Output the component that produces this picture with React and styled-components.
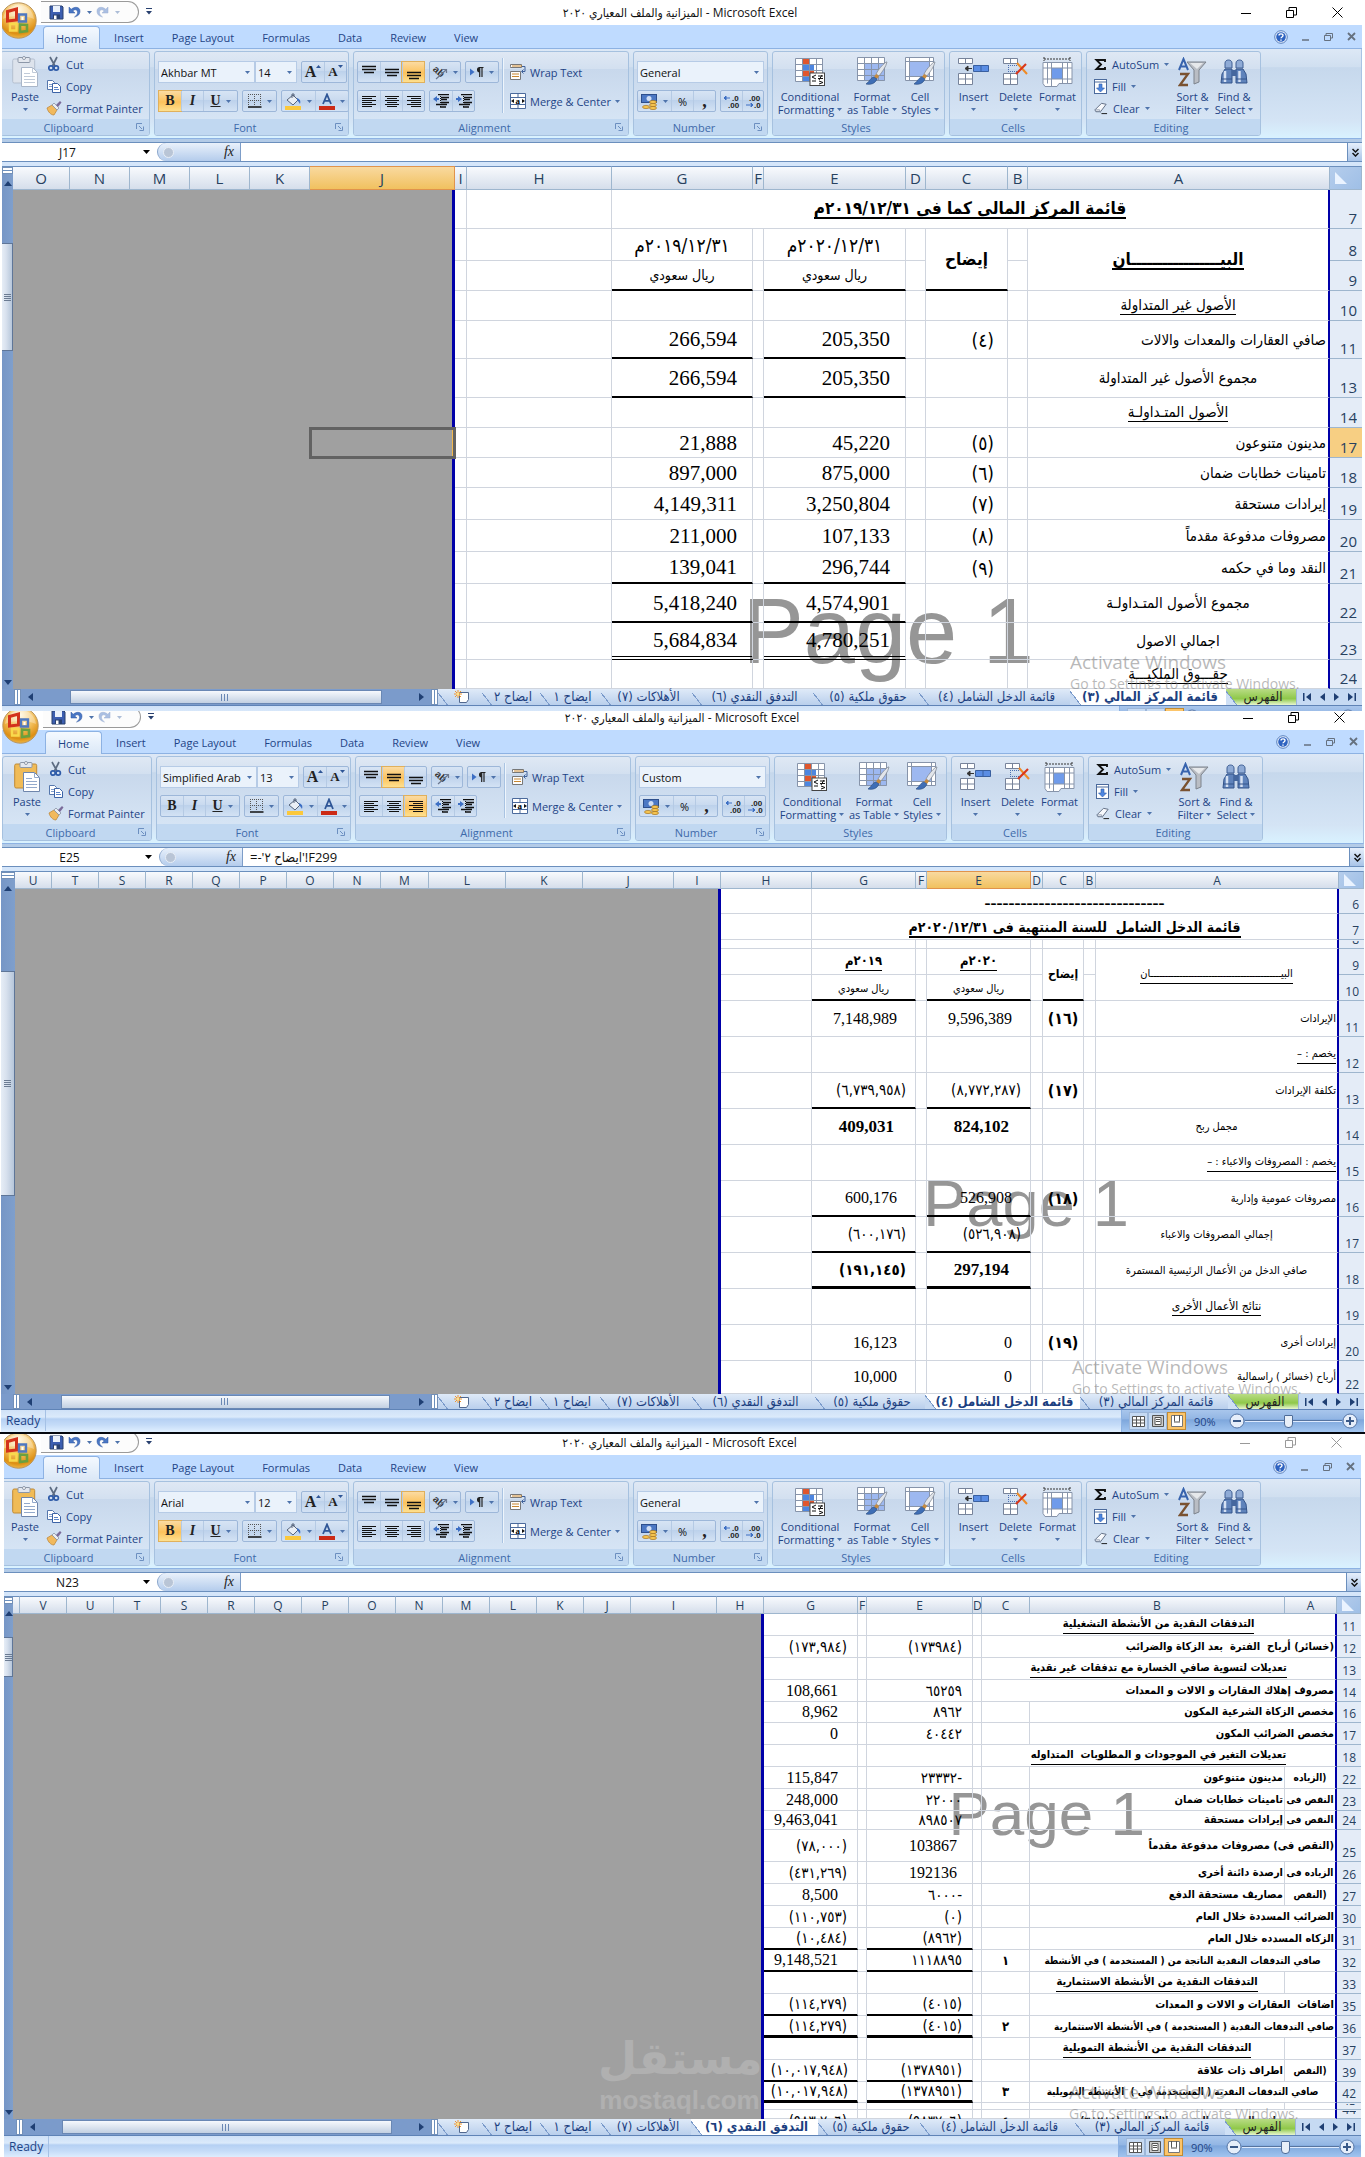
import React from 'react';
import styled, { createGlobalStyle, css } from 'styled-components';

const ui = '"Open Sans", "DejaVu Sans Condensed", "DejaVu Sans", sans-serif';
const arabic = '"DejaVu Sans Condensed", "DejaVu Sans", sans-serif';
const serif = '"Liberation Serif", "DejaVu Sans Condensed", "DejaVu Sans", serif';

const GlobalStyle = createGlobalStyle`
  * { box-sizing: border-box; }
  body { margin: 0; background: #fff; font-family: ${ui}; font-size: 11px; color: #1e4486; }
  button, input, select { font: inherit; color: inherit; margin: 0; padding: 0; border: 0; background: none; }
  svg { display: block; flex: none; }
`;

/* ---------- window frame ---------- */

const Window = styled.section`
  position: relative;
  overflow: hidden;
  margin-right: ${p => p.$right}px;
  border-left: ${p => p.$left}px solid #fff;
`;

const Chrome = styled.div`
  margin-left: ${p => p.$shift}px;
`;

const TitleBar = styled.header`
  display: flex;
  align-items: flex-end;
  height: ${p => p.$height}px;
  overflow: hidden;
  background: #fff;
`;

const TitleInner = styled.div`
  display: flex;
  flex: 1;
  height: 25px;
`;

const QuickAccess = styled.div`
  display: flex;
  align-items: center;
  width: 98px;
  height: 22px;
  margin: 1px 0 0 41px;
  padding: 0 0 0 8px;
  gap: 4px;
  border: 1px solid #9a9a9a;
  border-left: 0;
  border-radius: 0 11px 11px 0;
  background: #fcfcfc;
`;

const QatButton = styled.button`
  display: flex;
  align-items: center;
  gap: 6px;
  opacity: ${p => (p.$dim ? 0.45 : 1)};
`;

const QatMore = styled.button`
  width: 20px;
  height: 22px;
  display: flex;
  align-items: center;
  justify-content: center;
`;

const TitleText = styled.h1`
  flex: 1;
  margin: 0;
  padding-left: 169px;
  font-size: 12px;
  font-weight: 400;
  line-height: 25px;
  text-align: center;
  color: #111;
`;

const WindowButtons = styled.div`
  display: flex;
  align-items: center;
  width: 330px;
  justify-content: flex-end;
  padding-right: 19px;
  gap: 35px;
  color: ${p => (p.$idle ? '#999' : '#000')};
`;

const Orb = styled.button`
  position: absolute;
  left: ${p => p.$shift}px;
  top: ${p => p.$top}px;
  width: 37px;
  height: 37px;
  z-index: 5;
`;

const TabRow = styled.nav`
  display: flex;
  align-items: flex-end;
  height: 24px;
  padding-left: 43px;
  background: #bfdbff;
  border-bottom: 1px solid #8db2e3;
`;

const RibbonTab = styled.button`
  height: 22px;
  padding: 0 14px;
  font-size: 11px;
  ${p => p.$active && css`
    padding: 0 12px;
    margin-bottom: -1px;
    height: 23px;
    border: 1px solid #8db2e3;
    border-bottom: 0;
    border-radius: 4px 4px 0 0;
    background: linear-gradient(#f4f9ff, #dbe8f7);
  `}
`;

const TabTools = styled.div`
  display: flex;
  align-items: center;
  align-self: center;
  gap: 14px;
  margin-left: auto;
  padding-right: 6px;
`;

/* ---------- ribbon ---------- */

const Ribbon = styled.div`
  display: flex;
  gap: 4px;
  height: 90px;
  padding: 2px 0 3px;
  border-bottom: 1px solid #8db2e3;
  border-right: 1px solid #a8c3e4;
  background: linear-gradient(#dde8f6 0, #d0dff0 20%, #c6d8ec 21%, #d4e4f5 80%, #d9f2ff 100%);
`;

const GroupBox = styled.div`
  display: flex;
  flex-direction: column;
  width: ${p => p.$width}px;
  height: 85px;
  border: 1px solid #a6c1df;
  border-radius: 3px;
  background: linear-gradient(#dfe8f4 0, #d3e0f0 20%, #c8d8ec 21%, #dae8f7 100%);
  overflow: hidden;
`;

const GroupBody = styled.div`
  display: flex;
  flex: 1;
  padding: 0 3px;
`;

const GroupLabel = styled.div`
  display: flex;
  align-items: center;
  height: 16px;
  padding-right: 5px;
  background: #c1d8f1;
  color: #3e6aaa;
  span { flex: 1; text-align: center; }
`;

const Col = styled.div`
  display: flex;
  flex-direction: column;
  gap: 7px;
  padding-top: 9px;
`;

const Line = styled.div`
  display: flex;
  gap: 4px;
`;

const ButtonStrip = styled.div`
  display: flex;
  height: 22px;
  border: 1px solid #9db7d9;
  border-radius: 2px;
  background: linear-gradient(#d7e4f4 0, #c9daef 45%, #bcd1eb 46%, #d3e2f4 100%);
`;

const Tool = styled.button`
  display: flex;
  align-items: center;
  justify-content: center;
  gap: 5px;
  width: ${p => p.$width || 22}px;
  height: 20px;
  color: #111;
  & + & { border-left: 1px solid #b5cae4; }
  ${p => p.$tight && 'gap: 0; align-items: flex-start; padding-top: 3px;'}
  ${p => p.$on && css`background: linear-gradient(#fbdba2, #fcc25c 55%, #fee08e); box-shadow: 0 0 0 1px #e0b05c;`}
`;

const Glyph = styled.span`
  font-family: "Liberation Serif", serif;
  font-size: ${p => p.$size || 14}px;
  font-weight: ${p => (p.$light ? 400 : 700)};
  line-height: 14px;
  font-style: ${p => (p.$italic ? 'italic' : 'normal')};
  text-decoration: ${p => (p.$under ? 'underline' : 'none')};
  color: #222;
`;

const SelectWrap = styled.div`
  display: grid;
  width: ${p => p.$width}px;
  height: 22px;
  align-items: center;
  border: 1px solid #b6cbe6;
  background: #eaf2fb;
  margin-right: ${p => (p.$tight ? '-4px' : 0)};
  select, svg { grid-area: 1 / 1; }
  select { appearance: none; width: 100%; height: 20px; padding: 0 2px; color: #111; outline: 0; }
  svg { justify-self: end; margin-right: 4px; pointer-events: none; }
`;

const Separator = styled.div`
  width: 2px;
  margin: 6px 6px 6px 3px;
  border-left: 1px solid #a9c3e2;
  border-right: 1px solid #eef5fc;
`;

const SmallList = styled.div`
  display: flex;
  flex-direction: column;
  padding-top: 1px;
`;

const EditList = styled(SmallList)`
  width: 82px;
  padding-left: 4px;
`;

const SmallButton = styled.button`
  display: flex;
  align-items: center;
  gap: ${p => p.$gap || 4}px;
  height: 22px;
  white-space: nowrap;
`;

const BigButton = styled.button`
  display: flex;
  flex-direction: column;
  align-items: center;
  width: ${p => p.$width}px;
  padding-top: 3px;
  line-height: 13px;
  white-space: nowrap;
  i { height: 35px; display: flex; align-items: center; justify-content: center; padding-bottom: 2px; }
  span { display: flex; align-items: center; gap: 3px; height: 13px; }
`;

/* ---------- formula bar ---------- */

const FormulaBar = styled.div`
  display: flex;
  height: 27px;
  border-top: 3px solid #b3cbe7;
  border-bottom: 4px solid #d5e6fa;
`;

const FormulaInner = styled.div`
  display: flex;
  flex: 1;
  border-top: 1px solid #6b8fbd;
  border-bottom: 1px solid #6b8fbd;
  background: #fff;
`;

const NameBox = styled.input`
  width: 143px;
  padding-right: 8px;
  text-align: center;
  font-size: 12px;
  color: #111;
  outline: 0;
`;

const FxPill = styled.div`
  display: flex;
  align-items: center;
  justify-content: space-between;
  width: 84px;
  margin-left: 7px;
  padding: 0 6px 0 5px;
  border-left: 1px solid #8aa6cc;
  border-right: 1px solid #7d9dc8;
  border-radius: 10px 0 0 10px;
  background: linear-gradient(#e9f1fb, #b4ccec);
  &::before { content: ""; width: 9px; height: 9px; border-radius: 50%; background: #b9c5d6; border: 1px solid #e8eef6; }
`;

const FormulaInput = styled.input`
  flex: 1;
  min-width: 0;
  padding-left: 7px;
  font-size: 13px;
  color: #111;
  outline: 0;
`;

const Expand = styled.button`
  width: 15px;
  display: flex;
  align-items: center;
  justify-content: center;
  border-left: 1px solid #6b8fbd;
  background: linear-gradient(#e6effb, #a9c4e8);
`;

/* ---------- sheet ---------- */

const SheetArea = styled.div`
  position: relative;
  z-index: 0;
  display: flex;
`;

const VScroll = styled.div`
  display: flex;
  flex-direction: column;
  align-items: center;
  width: ${p => p.$width}px;
  padding-bottom: 4px;
  border-top: 1px solid #6b8fbd;
  background: linear-gradient(90deg, #7696c6, #7f9fcc);
`;

const VSplit = styled.div`
  width: 100%;
  height: 7px;
  margin-bottom: 7px;
  border: 1px solid #7390b8;
  background: linear-gradient(#fff 2px, #6b8fbd 2px, #6b8fbd 3px, #fff 3px);
`;

const VTrack = styled.div`
  flex: 1;
  width: 100%;
  padding-top: ${p => p.$offset}px;
`;

const VThumb = styled.div`
  display: flex;
  align-items: center;
  justify-content: center;
  width: 100%;
  height: ${p => p.$size}px;
  border: 1px solid #5f7698;
  border-left: 0;
  background: linear-gradient(90deg, #e6edf6, #d8e1ee 40%, #b6c6da);
`;

const Table = styled.table`
  position: relative;
  z-index: 1;
  flex: 1;
  width: 100%;
  min-width: 0;
  table-layout: fixed;
  border-collapse: separate;
  border-spacing: 0;
`;

const ColHead = styled.th`
  height: ${p => p.$height}px;
  padding: 0;
  border-top: 1px solid #6b8fbd;
  border-right: 1px solid #9eb6ce;
  border-bottom: 1px solid #9eb6ce;
  background: ${p => (p.$on ? 'linear-gradient(#f9d99f, #f1c15f)' : 'linear-gradient(#f8fafd, #d5deeb)')};
  ${p => p.$on && 'border-color: #e0934c;'}
  font-size: ${p => p.$size}px;
  font-weight: 400;
  line-height: 15px;
  color: #27415f;
  text-align: center;
`;

const Corner = styled(ColHead)`
  background: linear-gradient(135deg, #b5cdec, #9fbfe6);
  svg { margin: 0 5px; }
`;

const RowHead = styled.th`
  height: ${p => p.$height}px;
  padding: 0 5px 0 0;
  border-bottom: 1px solid #9eb6ce;
  background: ${p => (p.$on ? '#f7cf83' : '#e4ecf7')};
  font-size: ${p => p.$size}px;
  font-weight: 400;
  color: #27415f;
  div { height: ${p => p.$height - 2}px; display: flex; align-items: flex-end; justify-content: flex-end; line-height: ${p => p.$size + 4}px; overflow: hidden; }
`;

const Outside = styled.td`
  padding: 0;
  background: #a0a0a0;
  ${p => p.$edge && 'border-right: 3px solid #0000a8;'}
  ${p => p.$picked && 'outline: 3px solid #626262; outline-offset: -2px; border-right-color: #f3b94e;'}
`;

const Cell = styled.td`
  height: ${p => p.$height}px;
  padding: 0;
  border-right: 1px solid #d0d5de;
  border-bottom: 1px solid #d0d5de;
  ${p => p.$line === 'thin' && 'border-bottom: 2px solid #000;'}
  ${p => p.$line === 'thick' && 'border-bottom: 3px solid #000;'}
  ${p => p.$line === 'double' && 'border-bottom: 4px double #000;'}
  ${p => p.$last && 'border-right: 2px solid #0000a8;'}
`;

const placement = { top: 'flex-start', low: 'flex-end' };

const CellText = styled.div`
  display: flex;
  height: ${p => p.$height - 4}px;
  align-items: ${p => placement[p.$place] || 'center'};
  justify-content: ${p => p.$align};
  padding-right: ${p => (p.$align === 'right' ? p.$pad : 0)}px;
  direction: rtl;
  white-space: pre;
  color: #000;
  font-family: ${p => (p.$serif ? serif : arabic)};
  font-size: ${p => p.$size}px;
  font-weight: ${p => (p.$bold ? 700 : 400)};
  line-height: 18px;
  span { ${p => p.$under && `border-bottom: ${p.$bold && p.$size > 13 ? 2 : 1}px solid #000;`} }
`;

const PageMark = styled.div`
  position: absolute;
  z-index: 0;
  right: ${p => p.$right}px;
  bottom: ${p => p.$bottom}px;
  font-family: "Liberation Sans", sans-serif;
  font-size: ${p => p.$size}px;
  line-height: 1;
  color: #969696;
  white-space: nowrap;
`;

const Activate = styled.div`
  position: absolute;
  z-index: 2;
  right: 58px;
  bottom: -4px;
  width: 234px;
  color: rgba(125, 125, 125, 0.55);
  font-size: 14px;
  line-height: 18px;
  white-space: nowrap;
  pointer-events: none;
  strong { display: block; font-size: 19px; font-weight: 400; line-height: 26px; }
`;

const Mostaql = styled.div`
  position: absolute;
  z-index: 2;
  right: 600px;
  bottom: 4px;
  width: 163px;
  text-align: center;
  font-family: "Liberation Sans", sans-serif;
  font-size: 26px;
  line-height: 30px;
  font-weight: 700;
  color: #b0b0b0;
  strong { display: block; font-family: "DejaVu Sans", sans-serif; font-size: 45px; line-height: 52px; }
`;

/* ---------- sheet tabs and status ---------- */

const TabBar = styled.div`
  position: relative;
  z-index: 3;
  display: flex;
  align-items: stretch;
  height: ${p => p.$height}px;
  padding-left: 12px;
  background: #7b9bcb;
  border-bottom: 1px solid #5f83b6;
`;

const Split = styled.div`
  width: 7px;
  border: 1px solid #7390b8;
  background: linear-gradient(90deg, #fff 40%, #6b8fbd 41%, #6b8fbd 60%, #fff 61%);
`;

const HScroll = styled.div`
  display: flex;
  flex: 1;
  align-items: center;
  justify-content: space-between;
  padding: 0 7px;
  background: #7b9bcb;
`;

const HThumb = styled.div`
  display: flex;
  align-items: center;
  justify-content: center;
  width: ${p => p.$width}%;
  height: 14px;
  border: 1px solid #6a88b4;
  background: linear-gradient(#f6f9fd, #c2d0e2);
`;

const SheetTab = styled.button`
  display: flex;
  align-items: center;
  justify-content: center;
  width: ${p => p.$width}px;
  padding-left: 4px;
  direction: rtl;
  white-space: nowrap;
  font-family: ${arabic};
  font-size: 13px;
  line-height: 14px;
  color: #1c3f80;
  background: linear-gradient(52deg, transparent 0, transparent 7px, #7b9bcb 7px, #7b9bcb 8px, transparent 8px), linear-gradient(#dfeaf8, #b9cfec);
  ${p => p.$green && css`color: #222; background: linear-gradient(52deg, #cfe0f5 0, #cfe0f5 8px, #7b9bcb 8px, #7b9bcb 9px, transparent 9px), linear-gradient(#b9dc85, #8fc84a 60%, #e8f6d0);`}
  ${p => p.$active && css`font-weight: 700; background: linear-gradient(52deg, #c8daf1 0, #c8daf1 8px, #7b9bcb 8px, #7b9bcb 9px, #fff 9px);`}
`;

const SheetNav = styled.div`
  display: flex;
  align-items: center;
  justify-content: space-between;
  width: 66px;
  padding: 0 6px;
  border-left: 1px solid #9db7d9;
  background: #c6daf3;
`;

const Status = styled.footer`
  display: flex;
  align-items: flex-start;
  height: ${p => p.$height}px;
  overflow: hidden;
  background: linear-gradient(#cfe1f7 0, #dbeafb 7px, #b5d0f3 9px, #c5dcf8 15px, #e1f0ff 22px);
`;

const Ready = styled.div`
  width: 45px;
  padding-left: 5px;
  line-height: 21px;
  font-size: 12px;
  border-right: 1px solid #a5c1e5;
`;

const StatusTools = styled.div`
  display: flex;
  align-items: center;
  width: 243px;
  height: 22px;
  margin-left: auto;
  padding: 0 6px 0 7px;
  border-left: 1px solid #8db2e3;
  background: linear-gradient(#a9c6ec 0, #93b6e4 40%, #7ea7dc 45%, #a4c7f1 100%);
`;

const ViewButton = styled.button`
  display: flex;
  align-items: center;
  justify-content: center;
  width: 19px;
  height: 18px;
  background: ${p => (p.$on ? '#fcc56a' : '#c6daf3')};
  border: 1px solid ${p => (p.$on ? '#c08a35' : '#9db7d9')};
`;

const Percent = styled.span`
  width: 35px;
  margin-left: 8px;
`;

const Zoom = styled.input`
  flex: 1;
  min-width: 0;
  appearance: none;
  height: 16px;
  background: linear-gradient(transparent 7px, #57749f 7px, #57749f 8px, #dceaff 8px, #dceaff 9px, transparent 9px);
  &::-webkit-slider-thumb { appearance: none; width: 9px; height: 13px; border: 1px solid #4d6b98; border-radius: 1px 1px 4px 4px; background: #e8eff8; }
`;

const Divider = styled.div`
  height: 2px;
  background: #05080f;
`;

/* ---------- icons ---------- */

const Down = ({ c = '#4e73ab' }) => <svg width="5" height="3" viewBox="0 0 5 3"><path d="M0 0h5L2.5 3z" fill={c} /></svg>;

const Up = () => <svg width="5" height="3" viewBox="0 0 5 3"><path d="M0 3h5L2.5 0z" fill="#2e5596" /></svg>;

const Tri = ({ d, c = '#1f3f73', w = 6, h = 8 }) => <svg width={w} height={h} viewBox={`0 0 ${w} ${h}`}><path d={d} fill={c} /></svg>;

const OrbArt = () => (
  <svg width="37" height="37" viewBox="0 0 37 37">
    <defs>
      <radialGradient id="orb" cx=".5" cy=".2" r=".9">
        <stop offset="0" stopColor="#fff6dc" /><stop offset=".45" stopColor="#f3bf5b" />
        <stop offset=".75" stopColor="#dd8f14" /><stop offset="1" stopColor="#ffd768" />
      </radialGradient>
    </defs>
    <circle cx="18.5" cy="18.5" r="17.7" fill="url(#orb)" stroke="#b9935a" />
    <path d="M3 17c7-4 23-4 31 0-1-9-8-14-15.500-14S4 9 3 17z" fill="#fff" opacity=".3" />
    <path d="M7.500 9.500l9-2.500v11l-9 1z" fill="none" stroke="#d3321b" strokeWidth="3" />
    <path d="M19 12.500h7v7h-7z" fill="none" stroke="#4f78c0" strokeWidth="2.400" />
    <path d="M21.500 15h2v3h-2z" fill="#fff" />
    <path d="M10 22h6.500v6.500H10z" fill="none" stroke="#f9d94c" strokeWidth="2.400" />
    <path d="M20 22.500l7 .5v6l-7 1z" fill="none" stroke="#6ba03f" strokeWidth="2.600" />
  </svg>
);

const Save = () => (
  <svg width="15" height="15" viewBox="0 0 15 15">
    <path d="M1 1h12l1 1v12H1z" fill="#3c5eb0" stroke="#28406f" />
    <path d="M4 1h7v6H4z" fill="#eaf1fb" /><path d="M4 9.500h7V14H4z" fill="#28406f" /><path d="M5 10.500h2.500V14H5z" fill="#fff" />
  </svg>
);

const Undo = () => (
  <svg width="13" height="12" viewBox="0 0 13 12">
    <path d="M1 1v6h6L4.800 5C7 3 9.500 3.500 9.500 6.500c0 1.500-1 3-3 4.500 4-1 5.500-3 5.500-6C12 1 7 0 3.200 3.300z" fill="#4a77c4" stroke="#2f57a0" strokeWidth=".5" />
  </svg>
);

const Redo = () => (
  <svg width="13" height="12" viewBox="0 0 13 12">
    <path transform="matrix(-1 0 0 1 13 0)" d="M1 1v6h6L4.800 5C7 3 9.500 3.500 9.500 6.500c0 1.500-1 3-3 4.500 4-1 5.500-3 5.500-6C12 1 7 0 3.200 3.300z" fill="#4a77c4" stroke="#2f57a0" strokeWidth=".5" />
  </svg>
);

const Paste = ({ dim }) => (
  <svg width="27" height="31" viewBox="0 0 27 31">
    <rect x=".7" y="3" width="22" height="24" rx="1.500" fill={dim ? '#dde3ec' : '#f0bb57'} stroke={dim ? '#b4bfcf' : '#c08a35'} />
    <rect x="6" y="1.500" width="12" height="5" rx="1" fill="#e3e7ee" stroke="#8c97a8" /><circle cx="12" cy="2" r="1.500" fill="#fff" stroke="#8c97a8" />
    <path d="M9.500 11.500h11l5 5v14h-16z" fill="#fff" stroke={dim ? '#a9b6c9' : '#6f86ac'} />
    <path d="M20.500 11.500v5h5M12 17.500h6M12 20.500h11M12 23.500h11M12 26.500h11" fill="none" stroke={dim ? '#c0cad8' : '#93a9cb'} />
  </svg>
);

const Cut = () => (
  <svg width="16" height="16" viewBox="0 0 16 16">
    <path d="M4 1l5 9M11 1L6.500 10" stroke="#5d6c82" strokeWidth="1.700" fill="none" />
    <circle cx="5" cy="12" r="2.200" fill="none" stroke="#2e5ba8" strokeWidth="1.700" /><circle cx="10.200" cy="12" r="2.200" fill="none" stroke="#2e5ba8" strokeWidth="1.700" />
  </svg>
);

const Copy = () => (
  <svg width="16" height="16" viewBox="0 0 16 16">
    <path d="M1.500 2.500h5l2 2v7h-7z" fill="#fff" stroke="#5577ad" /><path d="M3 6.500h4M3 8.500h4" stroke="#7f9ccb" />
    <path d="M6.500 5.500h5l3 3v6h-8z" fill="#fff" stroke="#3c63a6" /><path d="M8 9.500h4M8 11.500h5" stroke="#5b84c7" />
  </svg>
);

const Painter = () => (
  <svg width="16" height="16" viewBox="0 0 16 16">
    <path d="M1 8l5-3 5 5-3 5c-3 0-6-3-7-7z" fill="#f1b95d" stroke="#b98133" strokeWidth=".7" />
    <path d="M6 5l2-2 5 5-2 2z" fill="#e9edf3" stroke="#7d8899" strokeWidth=".7" /><path d="M10 5l4-4 1.500 1.500L12 7z" fill="#7a6b9a" />
  </svg>
);

const Launcher = () => (
  <svg width="8" height="8" viewBox="0 0 8 8"><path d="M.5 6V.5H6M3 3l3 3M7.500 3.500v4h-4" fill="none" stroke="#6c8fc0" /></svg>
);

const Borders = () => (
  <svg width="14" height="14" viewBox="0 0 14 14">
    <path d="M.5 0v12M6.500 0v12M12.500 0v12M0 .5h13M0 6.500h13" stroke="#555" strokeDasharray="1 1" /><path d="M0 13h13.500" stroke="#111" strokeWidth="1.500" />
  </svg>
);

const Bucket = () => (
  <svg width="17" height="17" viewBox="0 0 17 17">
    <path d="M2 7l6-5 5 5-5 5z" fill="#e9eef5" stroke="#56657c" /><path d="M7 5V1h2v3" fill="none" stroke="#56657c" />
    <path d="M12 5c3 1 4 3 3 6-1-2-2-3-3-4z" fill="#3d6fc4" /><rect x="0" y="13" width="16" height="4" fill="#fbc83c" />
  </svg>
);

const FontColor = () => (
  <svg width="16" height="17" viewBox="0 0 16 17">
    <path d="M4 11L8 1.500 12 11M5.500 7.800h5" fill="none" stroke="#2e5596" strokeWidth="1.800" /><rect x="0" y="13" width="16" height="4" fill="#cc2a16" />
  </svg>
);

const lineSets = { top: [1, 4, 7], middle: [4, 7, 10], bottom: [7, 10, 13] };

const VAlign = ({ kind }) => (
  <svg width="14" height="15" viewBox="0 0 14 15">
    {lineSets[kind].map((y, i) => <path key={y} d={i === 2 ? `M2 ${y}.500h10` : `M0 ${y}.500h14`} stroke="#111" strokeWidth="1.400" />)}
  </svg>
);

const HAlign = ({ kind }) => (
  <svg width="14" height="13" viewBox="0 0 14 13">
    {[1, 3, 5, 7, 9, 11].map((y, i) => {
      const w = i % 2 ? 10 : 14;
      const x = kind === 'left' ? 0 : kind === 'right' ? 14 - w : (14 - w) / 2;
      return <path key={y} d={`M${x} ${y}.500h${w}`} stroke="#111" strokeWidth="1.200" />;
    })}
  </svg>
);

const Indent = ({ out }) => (
  <svg width="16" height="14" viewBox="0 0 16 14">
    <path d={out ? 'M0 5l4-3v2h2v2H4v2z' : 'M6 5L2 2v2H0v2h2v2z'} fill="#3d6fc4" />
    <path d="M5 .5h11M8 3.500h8M8 5.500h6M8 8.500h8M3 10.500h11M7 13h6" stroke="#111" strokeWidth="1.300" />
    <path d="M7.500 0v14" stroke="#111" strokeDasharray="1 1" />
  </svg>
);

const Orientation = () => (
  <svg width="16" height="16" viewBox="0 0 16 16">
    <text x="0" y="9" transform="rotate(42 4 8)" fontSize="10" fontFamily="Liberation Sans, sans-serif" fontWeight="700" fill="#333">ab</text>
    <path d="M4 15L14 6M14.500 9V5.500H11" fill="none" stroke="#6b7890" strokeWidth="1.200" />
  </svg>
);

const Para = () => (
  <svg width="14" height="12" viewBox="0 0 14 12">
    <path d="M0 2.500v7L4.500 6z" fill="#3d6fc4" /><path d="M13.500 1.500H9M9.700 1.500V11M12 1.500V11" stroke="#222" strokeWidth="1.200" fill="none" />
    <path d="M9.700 1C6 1 6 6.500 9.700 6.500z" fill="#222" />
  </svg>
);

const Wrap = () => (
  <svg width="16" height="16" viewBox="0 0 16 16">
    <path d="M.5 2.500V.5h11v3H.5zM.5 7.500h10v8H.5z" fill="#fdfdfd" stroke="#777" /><path d="M2 2h10M2 10h7M2 12.500h7" stroke="#c9872f" />
    <path d="M12 2.500h3v5h-3M13.500 5.500l-2 2 2 2" fill="none" stroke="#41639b" />
  </svg>
);

const Merge = () => (
  <svg width="16" height="16" viewBox="0 0 16 16">
    <path d="M.5 .5h15v15H.5zM.5 4.500h15M.5 11.500h15M8 .5v4M8 11.500v4" fill="#fff" stroke="#4b6a9c" />
    <path d="M1 8l3-2v4zM15 8l-3-2v4z" fill="#111" /><text x="5.500" y="10.500" fontSize="9" fontWeight="700" fontFamily="Liberation Serif, serif">a</text>
  </svg>
);

const Money = () => (
  <svg width="17" height="17" viewBox="0 0 17 17">
    <rect x=".5" y="1.500" width="15" height="8" fill="#4c78c4" stroke="#2d4f8d" /><circle cx="8" cy="5.500" r="2.500" fill="#cfdef5" />
    <ellipse cx="12" cy="9" rx="3.500" ry="1.600" fill="#f5c451" stroke="#a8741a" strokeWidth=".7" /><ellipse cx="12" cy="12" rx="3.500" ry="1.600" fill="#f5c451" stroke="#a8741a" strokeWidth=".7" />
    <ellipse cx="12" cy="15" rx="3.500" ry="1.600" fill="#f5c451" stroke="#a8741a" strokeWidth=".7" /><ellipse cx="5" cy="14" rx="3.500" ry="1.600" fill="#f5c451" stroke="#a8741a" strokeWidth=".7" />
  </svg>
);

const Decimal = ({ more }) => (
  <svg width="17" height="15" viewBox="0 0 17 15" fontFamily="Liberation Sans, sans-serif" fontSize="8" fontWeight="700" fill="#222">
    <text x={more ? 9 : 4} y="7">{more ? '.0' : '.00'}</text><text x={more ? 5 : 9} y="14">{more ? '.00' : '.0'}</text>
    <path d={more ? 'M1 4l2-2v4zM3 4h4' : 'M8 11L6 9v4zM5 11H1'} fill="#3d6fc4" stroke="#3d6fc4" />
  </svg>
);

const Grid = ({ fill }) => (
  <>
    <path d="M.5 .5h27v23H.5z" fill="#fff" />{fill}
    <path d="M.5 .5h27v23H.5zM.5 6.500h27M.5 12.500h27M.5 18.500h27M7.500 .5v23M14.500 .5v23M21.500 .5v23" fill="none" stroke="#8794aa" />
  </>
);

const Brush = () => (
  <>
    <path d="M29 5c-4 3-8 8-10 12l3 2c3-4 7-9 8-14z" fill="#e2e5ea" stroke="#79818e" strokeWidth=".7" />
    <path d="M19 17l3 2-2 3-3-2z" fill="#c98b3c" /><path d="M17 20c-3 0-4 4-8 7 4 1 9 0 11-5z" fill="#3f6eb5" stroke="#28497c" strokeWidth=".6" />
  </>
);

const CondIcon = () => (
  <svg width="30" height="28" viewBox="0 0 30 28">
    <Grid fill={<><path d="M8 1h6v5H8z" fill="#e0562d" /><path d="M8 7h11v5H8z" fill="#4d86e0" /><path d="M8 13h11v5H8z" fill="#e0562d" /><path d="M8 19h6v5H8z" fill="#4d86e0" /></>} />
    <rect x="15" y="15" width="14.500" height="12.500" fill="#fff" stroke="#444" />
    <path d="M21 17l-4 2 4 2M17 23h4M23 18h5M23 20.500h5M27 17l-3 5M24 23l4 1.500-4 1.500" fill="none" stroke="#111" />
  </svg>
);

const TableIcon = () => (
  <svg width="31" height="29" viewBox="0 0 31 29"><Grid fill={<path d="M8 7h20v17H8z" fill="#9db8f0" />} /><Brush /></svg>
);

const CellIcon = () => (
  <svg width="31" height="29" viewBox="0 0 31 29">
    <path d="M.5 .5h28v23H.5z" fill="#fff" stroke="#8794aa" /><path d="M5 5h19v14H5z" fill="#9db8f0" />
    <path d="M.5 4.500h28M.5 19.500h28M4.500 .5v23M24.500 .5v23" stroke="#8794aa" /><Brush />
  </svg>
);

const InsertIcon = () => (
  <svg width="31" height="27" viewBox="0 0 31 27">
    <path d="M.5 .5h14v5H.5zM7.500 .5v5M.5 15.500h14v11H.5zM.5 21h14M7.500 15.500v11" fill="#fff" stroke="#77839a" />
    <path d="M15.500 7.500h15v6h-15z" fill="#5a8de4" stroke="#395f9f" /><path d="M23 7.500v6" stroke="#395f9f" />
    <path d="M14 10.500H8M10 8l-3 2.500 3 2.500z" stroke="#333" fill="#333" />
  </svg>
);

const DeleteIcon = () => (
  <svg width="25" height="27" viewBox="0 0 25 27">
    <path d="M.5 .5h14v5H.5zM7.500 .5v5M.5 15.500h14v11H.5zM.5 21h14M7.500 15.500v11" fill="#fff" stroke="#77839a" />
    <path d="M5 7.500h9M5 13.500h9M5.500 7v7" stroke="#4b6fb0" strokeDasharray="1 1" />
    <path d="M14 5l10 11" stroke="#f08a24" strokeWidth="2" /><path d="M23 6L13 16" stroke="#d9361a" strokeWidth="2.200" />
  </svg>
);

const FormatIcon = () => (
  <svg width="31" height="30" viewBox="0 0 31 30">
    <path d="M2 2h26M2 0v4M28 0v4" stroke="#333" strokeDasharray="2 1" /><path d="M1 5.500h29v21H17l-2 3H3l-2-3z" fill="#fff" stroke="#8794aa" />
    <path d="M10 11h10v11H10z" fill="#6f9bea" /><path d="M1 11h29M1 22h29M9.500 5.500v24M20.500 5.500v21M25.500 5.500v21M5.500 5.500v21" stroke="#8794aa" />
  </svg>
);

const Sigma = () => (
  <svg width="13" height="13" viewBox="0 0 13 13"><path d="M11 4V2H2.500l4.500 4.500L2.500 11H11V9" fill="none" stroke="#111" strokeWidth="1.900" /></svg>
);

const FillIcon = () => (
  <svg width="13" height="15" viewBox="0 0 13 15">
    <rect x=".5" y=".5" width="12" height="14" fill="#fff" stroke="#4b6a9c" /><path d="M1 3h11" stroke="#4b6a9c" />
    <path d="M5 5h3v4h2.500L6.500 13 2.500 9H5z" fill="#4d86e0" stroke="#2d5aa8" strokeWidth=".6" />
  </svg>
);

const Eraser = () => (
  <svg width="14" height="14" viewBox="0 0 15 14">
    <path d="M1 9l7-7 5 1-6 8H2z" fill="#f7f9fc" stroke="#596880" /><path d="M8 13h6" stroke="#111" /><path d="M1 9l5 0 1 3" fill="none" stroke="#8a97ab" />
  </svg>
);

const SortIcon = () => (
  <svg width="29" height="30" viewBox="0 0 29 30">
    <path d="M9 5h19l-7 8v12l-5 2V13z" fill="#b9bdc4" stroke="#7d838d" /><path d="M12 6h13l-6 6z" fill="#e6e8eb" />
    <path d="M1 13L5.500 2 10 13M2.500 9.500h6" fill="none" stroke="#3763ae" strokeWidth="2" />
    <path d="M2 17h8L2 28h8" fill="none" stroke="#7a5230" strokeWidth="2.300" />
  </svg>
);

const FindIcon = () => (
  <svg width="28" height="26" viewBox="0 0 28 26">
    <path d="M5 9V4c0-4 7-4 7 0v5zM16 9V4c0-4 7-4 7 0v5z" fill="#8fabd6" stroke="#3f5f94" />
    <path d="M1 24l1-9 3-5h7v14zM27 24l-1-9-3-5h-7v14z" fill="#5f83bb" stroke="#34548a" /><path d="M12 11h4v6h-4z" fill="#45679e" />
    <path d="M5 12v11M19.500 12v11" stroke="#d5e1f3" strokeWidth="2.500" /><path d="M1 20h11M16 20h11" stroke="#34548a" />
  </svg>
);

const Help = () => (
  <svg width="14" height="14" viewBox="0 0 14 14">
    <circle cx="7" cy="7" r="6.300" fill="#e9f1fc" stroke="#5a80bd" /><circle cx="7" cy="7" r="4.800" fill="#2d62c0" />
    <path d="M5 5.500C5 3.300 9 3.300 9 5.500 9 7 7 7 7 8.300M7 9.500v1.300" fill="none" stroke="#fff" strokeWidth="1.400" />
  </svg>
);

const NewSheet = () => (
  <svg width="16" height="14" viewBox="0 0 16 14">
    <path d="M5.500 2.500h9v7l-2 3h-7z" fill="#fff" stroke="#51688f" /><path d="M4 0v8M0 4h8M1 1l6 6M7 1L1 7" stroke="#f0962e" /><circle cx="4" cy="4" r="1.500" fill="#ffe28a" />
  </svg>
);

const ZoomGlyph = ({ plus }) => (
  <svg width="16" height="16" viewBox="0 0 16 16">
    <circle cx="8" cy="8" r="7" fill="#e6eefa" stroke="#5474a5" /><path d={plus ? 'M4 8h8M8 4v8' : 'M4 8h8'} stroke="#3a5988" strokeWidth="2" />
  </svg>
);

/* ---------- chrome ---------- */

function Group({ name, width, launcher, children }) {
  return (
    <GroupBox $width={width}>
      <GroupBody>{children}</GroupBody>
      <GroupLabel><span>{name}</span>{launcher && <Launcher />}</GroupLabel>
    </GroupBox>
  );
}

function Picker({ label, value, width, tight }) {
  return (
    <SelectWrap $width={width} $tight={tight}>
      <select aria-label={label} defaultValue={value}><option>{value}</option></select>
      <Down />
    </SelectWrap>
  );
}

function Big({ icon, a, b, width }) {
  return (
    <BigButton $width={width}>
      <i>{icon}</i>
      <span>{a}</span>
      <span>{b}<Down /></span>
    </BigButton>
  );
}

function ExcelRibbon({ book }) {
  return (
    <Ribbon>
      <Group name="Clipboard" width={150} launcher>
        <Big width={42} icon={<Paste dim={book.dimPaste} />} a="Paste" />
        <SmallList>
          <SmallButton><Cut />Cut</SmallButton>
          <SmallButton><Copy />Copy</SmallButton>
          <SmallButton><Painter />Format Painter</SmallButton>
        </SmallList>
      </Group>
      <Group name="Font" width={195} launcher>
        <Col>
          <Line>
            <Picker label="Font" value={book.font} width={97} tight />
            <Picker label="Font size" value={book.fontSize} width={42} />
            <ButtonStrip>
              <Tool $tight $width={22} aria-label="Grow font"><Glyph $size={16}>A</Glyph><Up /></Tool>
              <Tool $tight $width={22} aria-label="Shrink font"><Glyph $size={13}>A</Glyph><Down c="#2e5596" /></Tool>
            </ButtonStrip>
          </Line>
          <Line>
            <ButtonStrip>
              <Tool $on={book.bold} aria-label="Bold"><Glyph>B</Glyph></Tool>
              <Tool aria-label="Italic"><Glyph $italic>I</Glyph></Tool>
              <Tool $width={34} aria-label="Underline"><Glyph $under>U</Glyph><Down /></Tool>
            </ButtonStrip>
            <ButtonStrip><Tool $width={33} aria-label="Borders"><Borders /><Down /></Tool></ButtonStrip>
            <ButtonStrip>
              <Tool $width={33} aria-label="Fill color"><Bucket /><Down /></Tool>
              <Tool $width={33} aria-label="Font color"><FontColor /><Down /></Tool>
            </ButtonStrip>
          </Line>
        </Col>
      </Group>
      <Group name="Alignment" width={276} launcher>
        <Col>
          <Line>
            <ButtonStrip>
              {['top', 'middle', 'bottom'].map(k => <Tool key={k} $on={book.vAlign === k} aria-label={k}><VAlign kind={k} /></Tool>)}
            </ButtonStrip>
            <ButtonStrip><Tool $width={30} aria-label="Orientation"><Orientation /><Down /></Tool></ButtonStrip>
            <ButtonStrip><Tool $width={32} aria-label="Text direction"><Para /><Down /></Tool></ButtonStrip>
          </Line>
          <Line>
            <ButtonStrip>
              {['left', 'center', 'right'].map(k => <Tool key={k} $on={book.hAlign === k} aria-label={k}><HAlign kind={k} /></Tool>)}
            </ButtonStrip>
            <ButtonStrip>
              <Tool aria-label="Decrease indent"><Indent out /></Tool>
              <Tool aria-label="Increase indent"><Indent /></Tool>
            </ButtonStrip>
          </Line>
        </Col>
        <Separator />
        <Col>
          <SmallButton><Wrap />Wrap Text</SmallButton>
          <SmallButton><Merge />Merge &amp; Center<Down /></SmallButton>
        </Col>
      </Group>
      <Group name="Number" width={135} launcher>
        <Col>
          <Picker label="Number format" value={book.format} width={127} />
          <Line>
            <ButtonStrip>
              <Tool $width={33} aria-label="Accounting"><Money /><Down /></Tool>
              <Tool aria-label="Percent style">%</Tool>
              <Tool aria-label="Comma style"><Glyph $size={18}>,</Glyph></Tool>
            </ButtonStrip>
            <ButtonStrip>
              <Tool $width={21} aria-label="Increase decimal"><Decimal more /></Tool>
              <Tool $width={21} aria-label="Decrease decimal"><Decimal /></Tool>
            </ButtonStrip>
          </Line>
        </Col>
      </Group>
      <Group name="Styles" width={173}>
        <Big width={68} icon={<CondIcon />} a="Conditional" b="Formatting" />
        <Big width={56} icon={<TableIcon />} a="Format" b="as Table" />
        <Big width={40} icon={<CellIcon />} a="Cell" b="Styles" />
      </Group>
      <Group name="Cells" width={133}>
        <Big width={41} icon={<InsertIcon />} a="Insert" />
        <Big width={43} icon={<DeleteIcon />} a="Delete" />
        <Big width={41} icon={<FormatIcon />} a="Format" />
      </Group>
      <Group name="Editing" width={175}>
        <EditList>
          <SmallButton $gap={5}><Sigma />AutoSum<Down /></SmallButton>
          <SmallButton $gap={5}><FillIcon />Fill<Down /></SmallButton>
          <SmallButton $gap={5}><Eraser />Clear<Down /></SmallButton>
        </EditList>
        <Big width={41} icon={<SortIcon />} a="Sort &amp;" b="Filter" />
        <Big width={42} icon={<FindIcon />} a="Find &amp;" b="Select" />
      </Group>
    </Ribbon>
  );
}

function ExcelChrome({ book }) {
  return (
    <Chrome $shift={book.shift}>
      <TitleBar $height={book.titleHeight}>
        <TitleInner>
          <QuickAccess>
            <QatButton aria-label="Save"><Save /></QatButton>
            <QatButton aria-label="Undo"><Undo /><Down /></QatButton>
            <QatButton aria-label="Redo" $dim={!book.canRedo}><Redo /><Down /></QatButton>
          </QuickAccess>
          <QatMore aria-label="Customize"><svg width="6" height="7" viewBox="0 0 6 7"><path d="M0 .5h6" stroke="#28406f" /><path d="M0 3h6L3 6.500z" fill="#28406f" /></svg></QatMore>
          <TitleText dir="ltr">الميزانية والملف المعياري ٢٠٢٠ - Microsoft Excel</TitleText>
          <WindowButtons $idle={book.idle}>
            <button aria-label="Minimize"><svg width="10" height="10" viewBox="0 0 10 10"><path d="M0 5.500h10" stroke="currentColor" /></svg></button>
            <button aria-label="Restore"><svg width="11" height="11" viewBox="0 0 11 11"><path d="M.5 3.500h7v7h-7zM3 3V.5h7.500V8H8" fill="none" stroke="currentColor" /></svg></button>
            <button aria-label="Close"><svg width="11" height="11" viewBox="0 0 11 11"><path d="M.5 .5l10 10M10.500 .5l-10 10" stroke="currentColor" /></svg></button>
          </WindowButtons>
        </TitleInner>
      </TitleBar>
      <TabRow>
        {['Home', 'Insert', 'Page Layout', 'Formulas', 'Data', 'Review', 'View'].map((t, i) => <RibbonTab key={t} $active={i === 0}>{t}</RibbonTab>)}
        <TabTools>
          <button aria-label="Help"><Help /></button>
          <button aria-label="Minimize workbook"><svg width="8" height="8" viewBox="0 0 8 8"><path d="M0 7h7" stroke="#66717f" strokeWidth="1.500" /></svg></button>
          <button aria-label="Restore workbook"><svg width="9" height="8" viewBox="0 0 9 8"><path d="M.5 2.500h6v5h-6zM2 2V.500h6.500V5H7" fill="none" stroke="#66717f" /></svg></button>
          <button aria-label="Close workbook"><svg width="9" height="9" viewBox="0 0 9 9"><path d="M1 1l7 7M8 1L1 8" stroke="#66717f" strokeWidth="1.800" /></svg></button>
        </TabTools>
      </TabRow>
      <ExcelRibbon book={book} />
      <FormulaBar>
        <FormulaInner>
          <NameBox aria-label="Name box" defaultValue={book.cell} />
          <button aria-label="Names"><Tri w={7} h={4} d="M0 0h7L3.500 4z" c="#000" /></button>
          <FxPill><Glyph $italic $light $size={14}>fx</Glyph></FxPill>
          <FormulaInput dir="ltr" aria-label="Formula" defaultValue={book.formula} />
          <Expand aria-label="Expand"><svg width="7" height="9" viewBox="0 0 7 9"><path d="M.5 1l3 3 3-3M.5 5l3 3 3-3" fill="none" stroke="#111" strokeWidth="1.500" /></svg></Expand>
        </FormulaInner>
      </FormulaBar>
    </Chrome>
  );
}

/* ---------- grid ---------- */

function Sheet({ book }) {
  const { cols, rows, outside } = book;
  const headSize = book.headSize;
  return (
    <SheetArea>
      <PageMark $size={book.mark.size} $right={book.mark.right} $bottom={book.mark.bottom}>Page 1</PageMark>
      <VScroll $width={book.scrollWidth}>
        <VSplit />
        <Tri w={8} h={5} d="M0 5h8L4 0z" />
        <VTrack $offset={book.thumb[0]}><VThumb $size={book.thumb[1]}><Tri w={7} h={7} d="M0 0h7v1H0zM0 2h7v1H0zM0 4h7v1H0zM0 6h7v1H0z" c="#6b7b92" /></VThumb></VTrack>
        <Tri w={8} h={5} d="M0 0h8L4 5z" />
      </VScroll>
      <Table>
        <colgroup>
          {cols.map(([, w], i) => <col key={i} style={{ width: w }} />)}
          <col style={{ width: book.rowHeadWidth }} />
        </colgroup>
        <thead>
          <tr>
            {cols.map(([name], i) => <ColHead key={i} $height={book.headHeight} $size={headSize} $on={name === book.activeCol}>{name}</ColHead>)}
            <Corner $height={book.headHeight}><svg width="12" height="12" viewBox="0 0 12 12"><path d="M0 0v12h12z" fill="#eaf3ff" /></svg></Corner>
          </tr>
        </thead>
        <tbody>
          {rows.map(row => (
            <tr key={row.n}>
              <Outside colSpan={outside - 1} />
              <Outside $edge $picked={row.n === book.activeRow} />
              {row.c.map((cell, i) => {
                const c = cell || {};
                return (
                  <Cell key={i} $height={row.h} rowSpan={c.rows} colSpan={c.cols} $line={c.line} $last={i === row.c.length - 1 && !row.inner}>
                    {c.t && (
                      <CellText
                        $height={c.rowsHeight || row.h} $align={c.align || 'center'} $pad={c.pad || 0} $size={c.size}
                        $bold={c.bold} $serif={c.serif} $under={c.under} $place={c.place}
                      ><span>{c.t}</span></CellText>
                    )}
                  </Cell>
                );
              })}
              <RowHead $height={row.h} $size={headSize} $on={row.n === book.activeRow}><div>{row.n}</div></RowHead>
            </tr>
          ))}
        </tbody>
      </Table>
      {book.logo && <Mostaql><strong>مستقل</strong>mostaql.com</Mostaql>}
      <Activate><strong>Activate Windows</strong>Go to Settings to activate Windows.</Activate>
    </SheetArea>
  );
}

const sheetTabs = [
  ['ايضاح ٢', 58, 58, 58],
  ['ايضاح ١', 61, 60, 61],
  ['الأهلاكات (٧)', 91, 92, 90],
  ['التدفق النقدي (٦)', 121, 123, 127],
  ['حقوق ملكية (٥)', 106, 110, 102],
  ['قائمة الدخل الشامل (٤)', 151, 155, 155],
  ['قائمة المركز المالي (٣)', 156, 148, 150],
];

function Footer({ book, index }) {
  return (
    <>
      <TabBar $height={book.tabHeight}>
        <Split />
        <HScroll>
          <Tri w={5} h={8} d="M5 0v8L0 4z" />
          <HThumb $width={book.hThumb}><Tri w={9} h={7} d="M0 0h1v7H0zM3 0h1v7H3zM6 0h1v7H6z" c="#6a88b4" /></HThumb>
          <Tri w={5} h={8} d="M0 0v8l5-4z" />
        </HScroll>
        <Split />
        <SheetTab $width={44} aria-label="Insert sheet"><NewSheet /></SheetTab>
        {sheetTabs.map(([name, ...w]) => <SheetTab key={name} $width={w[index]} $active={name.includes(book.sheet)}>{name}</SheetTab>)}
        <SheetTab $width={70} $green>الفهرس</SheetTab>
        <SheetNav>
          <button aria-label="Last sheet"><Tri w={8} h={8} d="M0 0h1.500v8H0zM8 0v8L3 4z" /></button>
          <button aria-label="Next sheet"><Tri w={5} h={8} d="M5 0v8L0 4z" /></button>
          <button aria-label="Previous sheet"><Tri w={5} h={8} d="M0 0v8l5-4z" /></button>
          <button aria-label="First sheet"><Tri w={8} h={8} d="M8 0H6.500v8H8zM0 0v8l5-4z" /></button>
        </SheetNav>
      </TabBar>
      <Status $height={book.statusHeight}>
        {book.ready && <Ready>Ready</Ready>}
        <StatusTools>
          <ViewButton aria-label="Normal"><svg width="13" height="11" viewBox="0 0 13 11"><path d="M.5 .5h12v10H.5zM.5 4h12M.5 7h12M4.500 .5v10M8.500 .5v10" fill="#fff" stroke="#555" /></svg></ViewButton>
          <ViewButton aria-label="Page layout"><svg width="12" height="12" viewBox="0 0 12 12"><path d="M.5 .5h11v11H.5z" fill="#ccc" stroke="#555" /><path d="M3 2.500h6v7H3zM4 4.500h4M4 6.500h4" fill="#fff" stroke="#555" /></svg></ViewButton>
          <ViewButton $on aria-label="Page break"><svg width="12" height="12" viewBox="0 0 12 12"><path d="M.5 .5h11v11H.5z" fill="#fff" stroke="#777" /><path d="M3.500 0v6.500M8.500 0v6.500M3 7h6" stroke="#555" /></svg></ViewButton>
          {book.ready && <Percent>90%</Percent>}
          <button aria-label="Zoom out"><ZoomGlyph /></button>
          <Zoom type="range" aria-label="Zoom" min="10" max="190" defaultValue="90" />
          <button aria-label="Zoom in"><ZoomGlyph plus /></button>
        </StatusTools>
      </Status>
    </>
  );
}

/* ---------- data ---------- */

const line = (l = 'thin') => ({ line: l });

// balance sheet cells
const n1 = (t, o) => ({ t, serif: true, size: 21, align: 'right', pad: 15, ...o });
const a1 = (t, o) => ({ t, size: 15, align: 'right', pad: 2, ...o });
const c1 = (t, o) => ({ t, size: 15, ...o });
const note1 = t => ({ t, size: 19, align: 'right', pad: 13 });

const balanceRows = [
  { n: 7, h: 39, c: [null, null, c1('قائمة المركز المالى كما فى ٢٠١٩/١٢/٣١م', { cols: 7, under: true, size: 17, bold: true })] },
  { n: 8, h: 32, c: [null, null, c1('٢٠١٩/١٢/٣١م', { size: 19 }), null, c1('٢٠٢٠/١٢/٣١م', { size: 19 }), null, c1('إيضاح', { rows: 2, rowsHeight: 62, size: 17, bold: true, line: 'thin' }), null, c1('البيـــــــــــــــــان', { rows: 2, rowsHeight: 62, under: true, size: 17, bold: true })] },
  { n: 9, h: 30, inner: true, c: [null, null, c1('ريال سعودي', { line: 'thin', size: 14 }), null, c1('ريال سعودي', { line: 'thin', size: 14 }), null, null] },
  { n: 10, h: 30, c: [null, null, null, null, null, null, null, null, c1('الأصول غير المتداولة', { under: true })] },
  { n: 11, h: 38, c: [null, null, n1('266,594', line()), null, n1('205,350', line()), null, note1('(٤)'), null, a1('صافي العقارات والمعدات والالات')] },
  { n: 13, h: 39, c: [null, null, n1('266,594', line()), null, n1('205,350', line()), null, null, null, c1('مجموع الأصول غير المتداولة')] },
  { n: 14, h: 30, c: [null, null, null, null, null, null, null, null, c1('الأصول المتـداولـة', { under: true })] },
  { n: 17, h: 30, c: [null, null, n1('21,888'), null, n1('45,220'), null, note1('(٥)'), null, a1('مدينون متنوعون')] },
  { n: 18, h: 30, c: [null, null, n1('897,000'), null, n1('875,000'), null, note1('(٦)'), null, a1('تامينات خطابات ضمان')] },
  { n: 19, h: 32, c: [null, null, n1('4,149,311'), null, n1('3,250,804'), null, note1('(٧)'), null, a1('إيرادات مستحقة')] },
  { n: 20, h: 32, c: [null, null, n1('211,000'), null, n1('107,133'), null, note1('(٨)'), null, a1('مصروفات مدفوعة مقدماً')] },
  { n: 21, h: 32, c: [null, null, n1('139,041', line()), null, n1('296,744', line()), null, note1('(٩)'), null, a1('النقد وما في حكمه')] },
  { n: 22, h: 39, c: [null, null, n1('5,418,240', line()), null, n1('4,574,901', line()), null, null, null, c1('مجموع الأصول المتـداولـة')] },
  { n: 23, h: 37, c: [null, null, n1('5,684,834', line('double')), null, n1('4,780,251', line('double')), null, null, null, c1('اجمالي الاصول')] },
  { n: 24, h: 29, c: [null, null, null, null, null, null, null, null, c1('حقـــوق الملكيـــة', { under: true })] },
];

// income statement cells
const n2 = (t, o) => ({ t, serif: true, size: 16, align: 'right', pad: 18, ...o });
const b2 = (t, o) => ({ t, serif: true, size: 17, bold: true, align: 'right', pad: 21, ...o });
const p2 = (t, o) => ({ t, size: 15, align: 'right', pad: 9, ...o });
const a2 = (t, o) => ({ t, size: 11, align: 'right', pad: 1, ...o });
const c2 = (t, o) => ({ t, size: 11, ...o });
const note2 = t => ({ t, size: 16, bold: true });

const incomeRows = [
  { n: 6, h: 25, c: [null, { t: '------------------------------', size: 18, bold: true, serif: true, cols: 7, place: 'low' }] },
  { n: 7, h: 26, c: [null, c2('قائمة الدخل الشامل  للسنة المنتهية فى ٢٠٢٠/١٢/٣١م', { cols: 7, under: true, bold: true, size: 14, place: 'low' })] },
  { n: 8, h: 9, c: [null, null, null, null, null, null, null, null] },
  { n: 9, h: 26, c: [null, c2('٢٠١٩م', { under: true, bold: true, size: 13 }), null, c2('٢٠٢٠م', { under: true, bold: true, size: 13 }), null, c2('إيضاح', { rows: 2, rowsHeight: 52, size: 12, bold: true, line: 'thin' }), null, c2('البيـــــــــــــــــــــــــــــــــــــــــــــان', { rows: 2, rowsHeight: 52, under: true })] },
  { n: 10, h: 26, inner: true, c: [null, c2('ريال سعودي', { line: 'thin', place: 'low' }), null, c2('ريال سعودي', { line: 'thin', place: 'low' }), null, null] },
  { n: 11, h: 36, c: [null, n2('7,148,989'), null, n2('9,596,389'), null, note2('(١٦)'), null, a2('الإيرادات')] },
  { n: 12, h: 36, c: [null, null, null, null, null, null, null, a2('يخصم : –', { under: true })] },
  { n: 13, h: 36, c: [null, p2('(٦,٧٣٩,٩٥٨)', line()), null, p2('(٨,٧٧٢,٢٨٧)', line()), null, note2('(١٧)'), null, a2('تكلفة الإيرادات')] },
  { n: 14, h: 36, c: [null, b2('409,031'), null, b2('824,102'), null, null, null, c2('مجمل ربح')] },
  { n: 15, h: 36, c: [null, null, null, null, null, null, null, a2('يخصم : المصروفات والاعباء : –', { under: true })] },
  { n: 16, h: 36, c: [null, n2('600,176', line()), null, n2('526,908', line()), null, note2('(١٨)'), null, a2('مصروفات عمومية وإدارية')] },
  { n: 17, h: 36, c: [null, p2('(٦٠٠,١٧٦)', line()), null, p2('(٥٢٦,٩٠٨)', line()), null, null, null, c2('إجمالي المصروفات والاعباء')] },
  { n: 18, h: 36, c: [null, p2('(١٩١,١٤٥)', { line: 'thick', bold: true }), null, b2('297,194', line('thick')), null, null, null, c2('صافي الدخل من الأعمال الرئيسية المستمرة')] },
  { n: 19, h: 36, c: [null, null, null, null, null, null, null, c2('نتائج الأعمال الأخرى', { under: true, size: 12 })] },
  { n: 20, h: 36, c: [null, n2('16,123'), null, n2('0'), null, note2('(١٩)'), null, a2('إيرادات أخرى')] },
  { n: 22, h: 33, c: [null, n2('10,000'), null, n2('0'), null, null, null, a2('أرباح (خسائر ) راسمالية')] },
];

// cash flow cells
const n3 = (t, o) => ({ t, serif: true, size: 16, align: 'right', pad: 19, ...o });
const e3 = (t, o) => ({ t, serif: true, size: 16, align: 'right', pad: 15, ...o });
const p3 = (t, o) => ({ t, size: 15, align: 'right', pad: 10, ...o });
const w3 = (t, o) => ({ t, size: 15, align: 'right', pad: 9, ...o });
const a3 = (t, o) => ({ t, size: 11, bold: true, align: 'right', pad: 1, ...o });
const c3 = (t, o) => ({ t, size: 10, bold: true, ...o });
const h3 = (t, o) => ({ t, size: 11, bold: true, under: true, ...o });

const cashRows = [
  { n: 11, h: 22, c: [null, null, null, null, h3('التدفقات النقدية من الأنشطة التشغيلية', { cols: 3 })] },
  { n: 12, h: 22, c: [p3('(١٧٣,٩٨٤)'), null, p3('(١٧٣٩٨٤)'), null, a3('(خسائر) أرباح  الفترة  بعد الزكاة والضرائب', { cols: 3 })] },
  { n: 13, h: 22, c: [null, null, null, null, h3('تعديلات لتسوية صافي الخسارة مع تدفقات غير نقدية', { cols: 3 })] },
  { n: 14, h: 22, c: [n3('108,661'), null, p3('٦٥٢٥٩'), null, a3('مصروف إهلاك العقارات و الالات و المعدات', { cols: 3 })] },
  { n: 16, h: 21, c: [n3('8,962'), null, p3('٨٩٦٢'), null, null, a3('مخصص الزكاة الشرعية المكون', { cols: 2 })] },
  { n: 17, h: 22, c: [n3('0'), null, p3('٤٠٤٤٢'), null, null, a3('مخصص الضرائب المكون', { cols: 2 })] },
  { n: 18, h: 22, c: [null, null, null, null, h3('تعديلات التغير في الموجودات و المطلوبات  المتداوله', { cols: 3 })] },
  { n: 22, h: 22, c: [n3('115,847'), null, p3('-٢٣٣٣٢'), null, null, a3('مدينون متنوعون'), c3('(الزياده', { place: 'top' })] },
  { n: 23, h: 22, c: [n3('248,000'), null, p3('٢٢٠٠٠'), null, null, a3('تامينات خطابات ضمان'), c3('النقص فى')] },
  { n: 24, h: 19, c: [n3('9,463,041'), null, p3('٨٩٨٥٠٧'), null, null, a3('إيرادات مستحقة'), c3('النقص فى')] },
  { n: 25, h: 32, c: [p3('(٧٨,٠٠٠)'), null, e3('103867'), null, null, a3('(النقص فى) مصروفات مدفوعة مقدماً', { cols: 2 })] },
  { n: 26, h: 22, c: [p3('(٤٣١,٢٦٩)'), null, e3('192136'), null, null, a3('ارصدة دائنة أخرى'), c3('الزياده فى')] },
  { n: 27, h: 22, c: [n3('8,500'), null, p3('-٦٠٠٠'), null, null, a3('مصاريف مستحقة الدفع'), c3('(النقص', { place: 'top' })] },
  { n: 30, h: 22, c: [p3('(١١٠,٧٥٣)'), null, p3('(٠)'), null, null, a3('الضرائب المسددة خلال العام', { cols: 2 })] },
  { n: 31, h: 22, c: [p3('(١٠,٤٨٤)', line()), null, p3('(٨٩٦٢)', line()), null, null, a3('الزكاه المسدده خلال العام', { cols: 2 })] },
  { n: 32, h: 22, c: [n3('9,148,521', line()), null, p3('١١١٨٨٩٥', line()), null, c3('١', { size: 13 }), c3('صافي التدفقات النقدية الناتجة من ( المستخدمة ) في الأنشطة', { cols: 2 })] },
  { n: 33, h: 22, c: [null, null, null, null, null, h3('التدفقات النقدية من الأنشطة الاستثمارية'), null] },
  { n: 35, h: 22, c: [p3('(١١٤,٢٧٩)', line()), null, p3('(٤٠١٥)', line()), null, null, a3('اضافات  العقارات و الالات و المعدات', { cols: 2 })] },
  { n: 36, h: 22, c: [p3('(١١٤,٢٧٩)', line('thick')), null, p3('(٤٠١٥)', line('thick')), null, c3('٢', { size: 13 }), a3('صافي التدفقات النقدية ( المستخدمة ) في الأنشطة الاستثمارية', { cols: 2, size: 10 })] },
  { n: 37, h: 22, c: [null, null, null, null, null, h3('التدفقات النقدية من الأنشطة التمويلية'), null] },
  { n: 39, h: 22, c: [w3('(١٠,٠١٧,٩٤٨)', line()), null, p3('(١٣٧٨٩٥١)', line()), null, null, a3('اطراف ذات علاقة'), c3('(النقص')] },
  { n: 42, h: 21, c: [w3('(١٠,٠١٧,٩٤٨)', line('thick')), null, p3('(١٣٧٨٩٥١)', line('thick')), null, c3('٣', { size: 13 }), c3('صافي التدفقات النقدية ( المستخدمة في )  الأنشطة التمويلية', { cols: 2 })] },
  { n: 43, h: 7, c: [null, null, null, null, null, null, null] },
  { n: 44, h: 9, c: [p3('(٩٨٣,٧٠٦)', { place: 'top' }), null, p3('(٩٨٣٧٠٦)', { place: 'top' }), null, c3('٤', { place: 'top' }), c3('صافي التغير في النقدية خلال الفترة (١+٢+٣)', { cols: 2, place: 'top' })] },
];

const same = (names, w) => names.split('').map(n => [n, w]);

const books = [
  {
    cell: 'J17', formula: '', font: 'Akhbar MT', fontSize: '14', format: 'General', bold: true, vAlign: 'bottom', dimPaste: true,
    left: 2, right: 3, shift: -2, titleHeight: 25, headHeight: 24, headSize: 15, scrollWidth: 11, rowHeadWidth: 32,
    thumb: [57, 108], hThumb: 79, tabHeight: 17, statusHeight: 5, sheet: '(٣)', activeCol: 'J', activeRow: 17, outside: 6,
    cols: [['O', 57], ...same('NMLK', 60), ['J', 145], ['I', 12], ['H', 145], ['G', 141], ['F', 11], ['E', 142], ['D', 20], ['C', 82], ['B', 20], ['A', 302]],
    mark: { size: 92, right: 328, bottom: 12 }, rows: balanceRows,
  },
  {
    cell: 'E25', formula: "=-'ايضاح ٢'!F299", font: 'Simplified Arab', fontSize: '13', format: 'Custom', vAlign: 'middle', hAlign: 'right',
    left: 1, right: 1, shift: 1, titleHeight: 19, headHeight: 18, headSize: 12, scrollWidth: 14, rowHeadWidth: 25, ready: true,
    thumb: [80, 225], hThumb: 83, tabHeight: 16, statusHeight: 22, sheet: '(٤)', activeCol: 'E', outside: 13,
    cols: [['U', 37], ...same('TSRQPO', 47), ['N', 47], ['M', 48], ['L', 77], ['K', 77], ['J', 91], ['I', 47], ['H', 91], ['G', 104], ['F', 11], ['E', 104], ['D', 12], ['C', 41], ['B', 12], ['A', 243]],
    mark: { size: 65, right: 235, bottom: 158 }, rows: incomeRows,
  },
  {
    cell: 'N23', formula: '', font: 'Arial', fontSize: '12', format: 'General', bold: true, vAlign: 'bottom', canRedo: true, idle: true,
    left: 4, right: 4, shift: -4, titleHeight: 21, headHeight: 18, headSize: 12, scrollWidth: 9, rowHeadWidth: 24, ready: true,
    thumb: [21, 40], hThumb: 84, tabHeight: 17, statusHeight: 21, sheet: '(٦)', outside: 16, logo: true,
    cols: [['', 7], ...same('VUTSRQPONMLKJ', 47), ['I', 86], ['H', 47], ['G', 94], ['F', 9], ['E', 106], ['D', 9], ['C', 48], ['B', 255], ['A', 52]],
    mark: { size: 62, right: 216, bottom: 274 }, rows: cashRows,
  },
];

export default function App() {
  return (
    <>
      <GlobalStyle />
      <main>
        {books.map((book, i) => (
          <React.Fragment key={book.cell}>
            <Window $left={book.left} $right={book.right}>
              <Orb $shift={book.shift} $top={book.titleHeight - 23} aria-label="Office"><OrbArt /></Orb>
              <ExcelChrome book={book} />
              <Sheet book={book} />
              <Footer book={book} index={i} />
            </Window>
            {i === 1 && <Divider />}
          </React.Fragment>
        ))}
      </main>
    </>
  );
}
